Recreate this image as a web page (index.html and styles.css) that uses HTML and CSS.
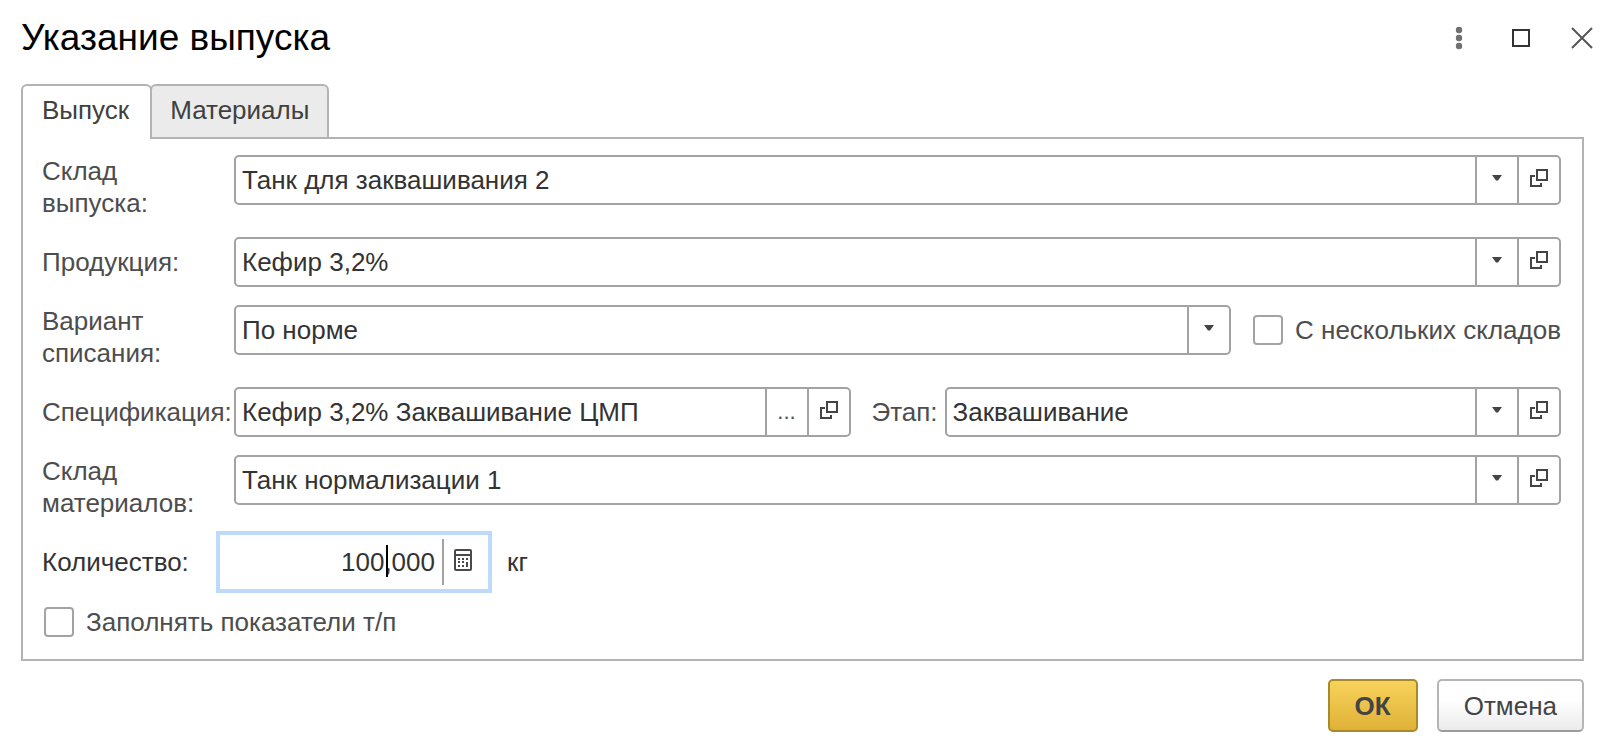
FILE: index.html
```html
<!DOCTYPE html>
<html lang="ru">
<head>
<meta charset="utf-8">
<title>Указание выпуска</title>
<link rel="stylesheet" href="styles.css">
</head>
<body>
<svg width="0" height="0" class="sprite" aria-hidden="true">
  <symbol id="arrow" viewBox="0 0 10 6"><path d="M0 0h10L6 5.5H4z" fill="#444"/></symbol>
  <symbol id="open" viewBox="0 0 18 18"><path d="M7 1h10v10H7zM5 7H1v10h10V14" fill="none" stroke="#444" stroke-width="2"/></symbol>
</svg>
<main class="dialog">
  <header class="header">
    <h1 class="title">Указание выпуска</h1>
    <div class="window-tools">
      <button class="tool" type="button" aria-label="Ещё"><svg width="8" height="24" viewBox="0 0 8 24"><g fill="#707070"><circle cx="4" cy="4" r="3.2"/><circle cx="4" cy="12" r="3.2"/><circle cx="4" cy="20" r="3.2"/></g></svg></button>
      <button class="tool" type="button" aria-label="Развернуть"><svg width="18" height="18" viewBox="0 0 18 18"><path d="M1 1h16v16H1z" fill="none" stroke="#333" stroke-width="2"/></svg></button>
      <button class="tool" type="button" aria-label="Закрыть"><svg width="22" height="22" viewBox="0 0 22 22"><path d="M1 1l20 20M21 1L1 21" stroke="#555" stroke-width="2"/></svg></button>
    </div>
  </header>

  <div class="tabs" role="tablist">
    <button class="tab tab-active" type="button" role="tab" aria-selected="true">Выпуск</button>
    <button class="tab" type="button" role="tab" aria-selected="false">Материалы</button>
  </div>

  <form class="panel" id="release">
    <div class="row">
      <label class="label label-wrap" for="store">Склад выпуска:</label>
      <div class="field">
        <input class="input" id="store" type="text" value="Танк для заквашивания 2">
        <button class="part" type="button" aria-label="Выбрать"><svg class="arrow"><use href="#arrow"/></svg></button>
        <button class="part" type="button" aria-label="Открыть"><svg class="open"><use href="#open"/></svg></button>
      </div>
    </div>
    <div class="row">
      <label class="label" for="product">Продукция:</label>
      <div class="field">
        <input class="input" id="product" type="text" value="Кефир 3,2%">
        <button class="part" type="button" aria-label="Выбрать"><svg class="arrow"><use href="#arrow"/></svg></button>
        <button class="part" type="button" aria-label="Открыть"><svg class="open"><use href="#open"/></svg></button>
      </div>
    </div>
    <div class="row">
      <label class="label label-wrap" for="variant">Вариант списания:</label>
      <div class="field">
        <select class="input" id="variant"><option>По норме</option></select>
        <span class="part"><svg class="arrow"><use href="#arrow"/></svg></span>
      </div>
      <label class="check check-inline"><input class="box" type="checkbox">С нескольких складов</label>
    </div>
    <div class="row">
      <label class="label" for="spec">Спецификация:</label>
      <div class="field">
        <input class="input" id="spec" type="text" value="Кефир 3,2% Заквашивание ЦМП">
        <button class="part part-dots" type="button" aria-label="Подобрать">...</button>
        <button class="part" type="button" aria-label="Открыть"><svg class="open"><use href="#open"/></svg></button>
      </div>
      <label class="label label-stage" for="stage">Этап:</label>
      <div class="field">
        <input class="input" id="stage" type="text" value="Заквашивание">
        <button class="part" type="button" aria-label="Выбрать"><svg class="arrow"><use href="#arrow"/></svg></button>
        <button class="part" type="button" aria-label="Открыть"><svg class="open"><use href="#open"/></svg></button>
      </div>
    </div>
    <div class="row">
      <label class="label label-wrap" for="materials">Склад материалов:</label>
      <div class="field">
        <input class="input" id="materials" type="text" value="Танк нормализации 1">
        <button class="part" type="button" aria-label="Выбрать"><svg class="arrow"><use href="#arrow"/></svg></button>
        <button class="part" type="button" aria-label="Открыть"><svg class="open"><use href="#open"/></svg></button>
      </div>
    </div>
    <div class="row">
      <label class="label label-amount" for="amount">Количество:</label>
      <div class="amount">
        <input class="input input-amount" id="amount" type="text" value="100,000">
        <span class="caret"></span>
        <button class="calc" type="button" aria-label="Калькулятор"><svg width="18" height="22" viewBox="0 0 18 22"><rect x="1" y="1" width="16" height="20" rx="1" fill="none" stroke="#4a4a4a" stroke-width="2"/><path d="M1 6h16" stroke="#4a4a4a" stroke-width="2"/><g fill="#4a4a4a"><path d="M4 9h2v2H4zM8 9h2v2H8zM12 9h2v2h-2zM4 12h2v2H4zM8 12h2v2H8zM12 13h2v5h-2zM4 16h2v2H4zM8 16h2v2H8z"/></g></svg></button>
      </div>
      <span class="unit">кг</span>
    </div>
    <label class="check check-last"><input class="box" type="checkbox">Заполнять показатели т/п</label>
  </form>

  <footer class="footer">
    <button class="button button-main" type="submit" form="release">ОК</button>
    <button class="button" type="button">Отмена</button>
  </footer>
</main>
</body>
</html>
```
FILE: styles.css
```css
* {
  box-sizing: border-box;
}

body {
  margin: 0;
  background: #fff;
  color: #4d4d4d;
  font: 26px/32px "Liberation Sans", Arial, sans-serif;
}

button,
input,
select {
  margin: 0;
  padding: 0;
  border: 0;
  background: none;
  color: inherit;
  font: inherit;
}

.sprite {
  position: absolute;
}

.dialog {
  padding: 16px 30px 24px 21px;
}

.header {
  display: flex;
  align-items: center;
  justify-content: space-between;
  height: 44px;
  margin-bottom: 24px;
}

.title {
  margin: 0;
  color: #000;
  font-size: 37px;
  font-weight: 400;
  line-height: 44px;
}

.window-tools {
  display: flex;
  align-items: center;
  margin-right: -28px;
}

.tool {
  display: flex;
  align-items: center;
  justify-content: center;
  width: 62px;
  height: 44px;
}

.tool:last-child {
  width: 60px;
}

.tabs {
  display: flex;
}

.tab {
  height: 55px;
  padding: 0 18px 4px;
  border: 2px solid #b3b3b3;
  border-radius: 6px 6px 0 0;
  background: #ebebeb;
  color: #404040;
}

.tab + .tab {
  margin-left: -2px;
}

.tab-active {
  padding: 0 21px 6px 19px;
  border-bottom: 0;
  background: #fff;
  position: relative;
  z-index: 1;
}

.panel {
  display: flex;
  flex-direction: column;
  gap: 18px;
  margin-top: -2px;
  padding: 16px 21px 20px 19px;
  border: 2px solid #b3b3b3;
}

.row {
  display: flex;
  align-items: flex-start;
}

.label {
  flex: none;
  width: 192px;
  line-height: 50px;
}

.label-wrap {
  padding-right: 30px;
  line-height: 32px;
}

.label-stage {
  width: 94px;
  padding-left: 21px;
}

.label-amount {
  width: 174px;
  color: #333;
}

.field {
  display: flex;
  flex: 1;
  min-width: 0;
  height: 50px;
  border: 2px solid #a3a3a3;
  border-radius: 5px;
}

.input {
  flex: 1;
  min-width: 0;
  padding-left: 6px;
  outline: 0;
  appearance: none;
  color: #333;
}

.part {
  display: flex;
  align-items: center;
  justify-content: center;
  flex: none;
  width: 42px;
  border-left: 2px solid #a3a3a3;
}

.part-dots {
  font-size: 22px;
}

.arrow {
  width: 10px;
  height: 6px;
  margin-bottom: 4px;
}

.open {
  width: 18px;
  height: 18px;
  margin-bottom: 4px;
}

.check {
  display: flex;
  align-items: center;
  gap: 12px;
}

.check-inline {
  height: 50px;
  margin-left: 22px;
}

.check-last {
  padding: 1px 2px;
}

.box {
  flex: none;
  width: 30px;
  height: 30px;
  border: 2px solid #a3a3a3;
  border-radius: 4px;
  appearance: none;
}

.amount {
  display: flex;
  align-items: center;
  width: 276px;
  height: 62px;
  margin: -6px 0;
  border: 4px solid #bddaf8;
  position: relative;
}

.input-amount {
  height: 46px;
  padding-right: 7px;
  border-right: 2px solid #a3a3a3;
  text-align: right;
}

.caret {
  position: absolute;
  top: 10px;
  right: 100px;
  width: 2px;
  height: 32px;
  background: #000;
}

.calc {
  display: flex;
  align-items: center;
  justify-content: center;
  width: 44px;
  padding-right: 6px;
  margin-bottom: 4px;
}

.unit {
  margin-left: 15px;
  color: #333;
  line-height: 50px;
}

.footer {
  display: flex;
  justify-content: flex-end;
  gap: 19px;
  margin-top: 18px;
}

.button {
  height: 53px;
  padding: 0 25px;
  border: 2px solid #b5b5b5;
  border-bottom-color: #9c9c9c;
  border-radius: 5px;
  background: linear-gradient(#fff 40%, #ebebeb);
  color: #444;
}

.button-main {
  border-color: #a88a2c;
  background: linear-gradient(#f7d35c, #e0b137);
  font-weight: 700;
}
```
